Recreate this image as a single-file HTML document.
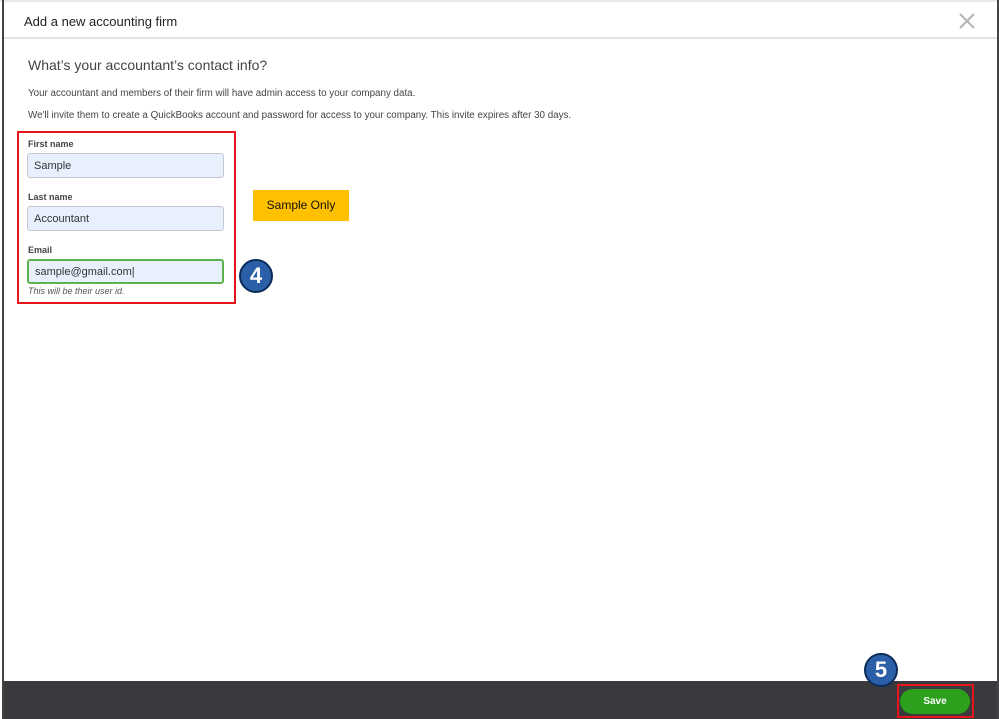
<!DOCTYPE html>
<html><head><meta charset="utf-8"><style>
*{margin:0;padding:0;box-sizing:border-box}
body{width:999px;height:719px;background:#fff;font-family:"Liberation Sans",sans-serif;position:relative;overflow:hidden;color:#393a3d}
.lb{position:absolute;left:2px;top:0;width:2px;height:719px;background:#444}
.rb{position:absolute;right:0;top:0;width:2px;height:719px;background:#444}
.top{position:absolute;left:0;top:0;width:999px;height:2px;background:#e8e8e8}
.hdr{position:absolute;left:24px;top:14px;font-size:13px;color:#222}
.hl{position:absolute;left:4px;top:37px;width:993px;height:2px;background:#e3e3e3}
.x{position:absolute;left:957px;top:11px}
.h2{position:absolute;left:28px;top:57px;font-size:14px;color:#444}
.p{position:absolute;left:28px;font-size:9.8px;color:#444}
.red{position:absolute;border:2px solid #e8141b}
.lab{position:absolute;left:28px;font-size:9px;font-weight:bold;color:#444}
.in{position:absolute;left:27px;width:197px;height:25px;background:#e8f0fe;border:1px solid #c4c8cc;border-radius:3px;font-size:11px;padding:6px 0 0 6px;color:#333}
.badge{position:absolute;width:34px;height:34px;border-radius:50%;background:#2b5fa8;border:2px solid #0d2c5a;color:#fff;font-weight:bold;font-size:22px;text-align:center;line-height:30px}
.foot{position:absolute;left:4px;top:681px;width:993px;height:38px;background:#393a3d}
.save{position:absolute;left:900px;top:689px;width:70px;height:25px;border-radius:13px;background:#2ca01c;color:#fff;font-weight:bold;font-size:10px;text-align:center;line-height:25px}
</style></head><body>
<div class="top"></div>
<div class="lb"></div><div class="rb"></div>
<div class="hdr">Add a new accounting firm</div>
<svg class="x" width="20" height="20" viewBox="0 0 20 20"><path d="M3 3L17 17M17 3L3 17" stroke="#b0b4b8" stroke-width="2"/></svg>
<div class="hl"></div>
<div class="h2">What’s your accountant’s contact info?</div>
<div class="p" style="top:88px">Your accountant and members of their firm will have admin access to your company data.</div>
<div class="p" style="top:110px">We'll invite them to create a QuickBooks account and password for access to your company. This invite expires after 30 days.</div>
<div class="red" style="left:17px;top:131px;width:219px;height:173px"></div>
<div class="lab" style="top:139px">First name</div>
<div class="in" style="top:153px">Sample</div>
<div class="lab" style="top:192px">Last name</div>
<div class="in" style="top:206px">Accountant</div>
<div class="lab" style="top:245px">Email</div>
<div class="in" style="top:259px;border:2px solid #5ab44b;padding-top:5px">sample@gmail.com|</div>
<div style="position:absolute;left:28px;top:286px;font-size:9px;font-style:italic;color:#555">This will be their user id.</div>
<div style="position:absolute;left:253px;top:190px;width:96px;height:31px;background:#ffc000;font-size:12px;color:#111;text-align:center;line-height:31px">Sample Only</div>
<div class="badge" style="left:239px;top:259px">4</div>
<div class="foot"></div>
<div class="badge" style="left:864px;top:653px">5</div>
<div class="red" style="left:897px;top:684px;width:77px;height:34px"></div>
<div class="save">Save</div>
</body></html>
